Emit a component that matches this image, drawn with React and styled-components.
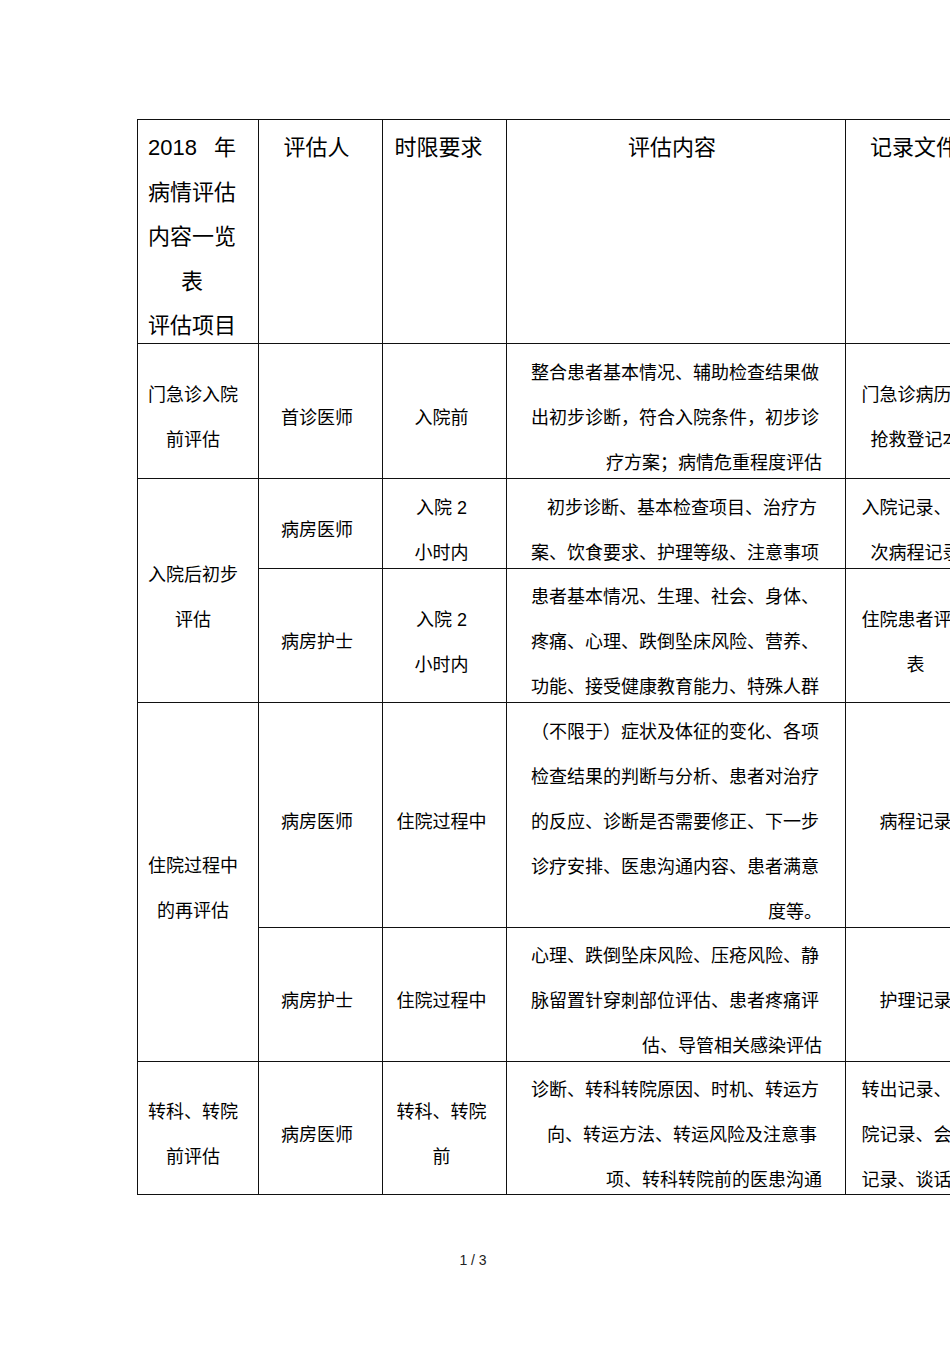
import React from 'react';
import styled, { createGlobalStyle } from 'styled-components';

const GlobalStyle = createGlobalStyle`
  html, body {
    margin: 0;
    padding: 0;
    background: #fff;
    overflow: hidden;
  }
`;

const Page = styled.div`
  width: 950px;
  height: 1345px;
  overflow: hidden;
  background: #fff;
  padding: 119px 0 0 137px;
  box-sizing: border-box;
  font-family: "Liberation Sans", "Noto Sans CJK SC", sans-serif;
  color: #000;
`;

const Table = styled.div`
  display: grid;
  grid-template-columns: 120px 123px 123px 338px 150px;
  grid-template-rows: 223px 134px 89px 133px 224px 133px 132px;
  gap: 1px;
  width: max-content;
  background: #111;
  border: 1px solid #111;
`;

const HeadCell = styled.div`
  background: #fff;
  font-size: 22px;
  line-height: 44.5px;
  padding: 6px ${(p) => p.$shift || 0}px 0 ${(p) => p.$left || 0}px;
  text-align: center;
  white-space: nowrap;
`;

const SplitLine = styled.div`
  display: flex;
  justify-content: space-between;
`;

const Cell = styled.div`
  background: #fff;
  display: flex;
  flex-direction: column;
  justify-content: center;
  font-size: 18px;
  line-height: 45px;
  padding: 14px ${(p) => p.$shift || 0}px 0 ${(p) => p.$left || 0}px;
  text-align: center;
  white-space: nowrap;
  overflow: visible;
  grid-row: ${(p) => (p.$span ? `span ${p.$span}` : 'auto')};
`;

const ContentCell = styled(Cell)`
  padding: 14px 23px 0 24px;
`;

const Line = styled.div`
  text-align: ${(p) => (p.$align === 'left' ? 'left' : 'right')};
  padding-right: ${(p) => (p.$align === 'end' ? 5 : 0)}px;
`;

const PageNumber = styled.div`
  margin: 57px 0 0 -137px;
  width: 946px;
  text-align: center;
  font-family: "Liberation Sans", sans-serif;
  font-size: 14px;
  line-height: 16px;
  color: #222;
`;

const groups = [
  {
    item: ['门急诊入院', '前评估'],
    subs: [
      {
        who: '首诊医师',
        when: ['入院前'],
        content: [
          ['整合患者基本情况、辅助检查结果做', 'left'],
          ['出初步诊断，符合入院条件，初步诊', 'left'],
          ['疗方案；病情危重程度评估', 'right'],
        ],
        docs: ['门急诊病历、', '抢救登记本'],
      },
    ],
  },
  {
    item: ['入院后初步', '评估'],
    subs: [
      {
        who: '病房医师',
        when: ['入院 2', '小时内'],
        content: [
          ['初步诊断、基本检查项目、治疗方', 'end'],
          ['案、饮食要求、护理等级、注意事项', 'left'],
        ],
        docs: ['入院记录、首', '次病程记录'],
      },
      {
        who: '病房护士',
        when: ['入院 2', '小时内'],
        content: [
          ['患者基本情况、生理、社会、身体、', 'left'],
          ['疼痛、心理、跌倒坠床风险、营养、', 'left'],
          ['功能、接受健康教育能力、特殊人群', 'left'],
        ],
        docs: ['住院患者评估', '表'],
      },
    ],
  },
  {
    item: ['住院过程中', '的再评估'],
    subs: [
      {
        who: '病房医师',
        when: ['住院过程中'],
        content: [
          ['（不限于）症状及体征的变化、各项', 'left'],
          ['检查结果的判断与分析、患者对治疗', 'left'],
          ['的反应、诊断是否需要修正、下一步', 'left'],
          ['诊疗安排、医患沟通内容、患者满意', 'left'],
          ['度等。', 'right'],
        ],
        docs: ['病程记录'],
      },
      {
        who: '病房护士',
        when: ['住院过程中'],
        content: [
          ['心理、跌倒坠床风险、压疮风险、静', 'left'],
          ['脉留置针穿刺部位评估、患者疼痛评', 'left'],
          ['估、导管相关感染评估', 'right'],
        ],
        docs: ['护理记录'],
      },
    ],
  },
  {
    item: ['转科、转院', '前评估'],
    subs: [
      {
        who: '病房医师',
        when: ['转科、转院', '前'],
        content: [
          ['诊断、转科转院原因、时机、转运方', 'left'],
          ['向、转运方法、转运风险及注意事', 'end'],
          ['项、转科转院前的医患沟通', 'right'],
        ],
        docs: ['转出记录、转', '院记录、会诊', '记录、谈话记'],
      },
    ],
  },
];

const Lines = ({ lines }) => lines.map((l) => <div key={l}>{l}</div>);

export default function App() {
  return (
    <>
      <GlobalStyle />
      <Page>
        <Table>
          <HeadCell $left={10} $shift={22}>
            <SplitLine>
              <span>2018</span>
              <span>年</span>
            </SplitLine>
            <div>病情评估</div>
            <div>内容一览</div>
            <div>表</div>
            <div>评估项目</div>
          </HeadCell>
          <HeadCell $shift={8}>评估人</HeadCell>
          <HeadCell $shift={12}>时限要求</HeadCell>
          <HeadCell $shift={8}>评估内容</HeadCell>
          <HeadCell $shift={14}>记录文件</HeadCell>

          {groups.map((g) =>
            g.subs.map((s, i) => (
              <React.Fragment key={g.item[0] + i}>
                {i === 0 && (
                  <Cell $left={10} $shift={20} $span={g.subs.length}>
                    <Lines lines={g.item} />
                  </Cell>
                )}
                <Cell $shift={7}>{s.who}</Cell>
                <Cell $shift={6}>
                  <Lines lines={s.when} />
                </Cell>
                <ContentCell>
                  {s.content.map(([text, align]) => (
                    <Line key={text} $align={align}>
                      {text}
                    </Line>
                  ))}
                </ContentCell>
                <Cell $shift={11}>
                  <Lines lines={s.docs} />
                </Cell>
              </React.Fragment>
            ))
          )}
        </Table>
        <PageNumber>1 / 3</PageNumber>
      </Page>
    </>
  );
}
